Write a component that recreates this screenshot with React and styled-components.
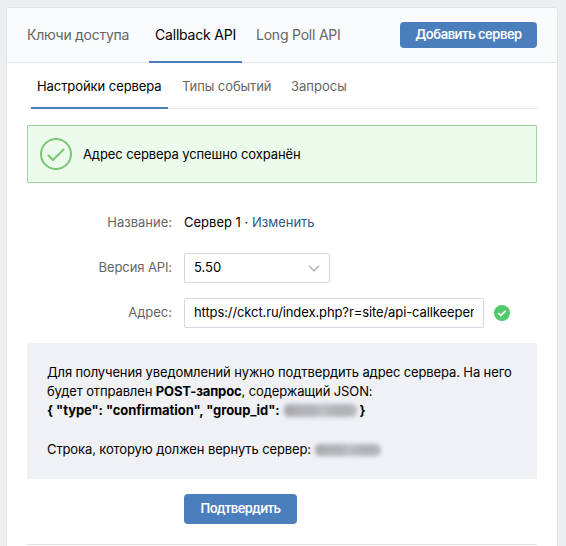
import React from "react";
import styled, { createGlobalStyle } from "styled-components";

const GlobalStyle = createGlobalStyle`
  * { box-sizing: border-box; }
  html, body { margin: 0; height: 546px; overflow: hidden; background: #edeef0; }
  body, input, button {
    font-family: Inter, "Liberation Sans", sans-serif;
    font-size: 13px;
    color: #000;
  }
`;

const Page = styled.main`
  height: 546px;
  padding: 7px 8px 0 6px;
  overflow: hidden;
`;

const Card = styled.section`
  height: 560px;
  background: #fff;
  border: 1px solid #e1e3e8;
  border-radius: 4px;
  overflow: hidden;
`;

const Header = styled.header`
  display: flex;
  align-items: flex-start;
  height: 55px;
  padding-right: 20px;
  background: #fafbfc;
  border-bottom: 1px solid #e4e6ea;
`;

const Tabs = styled.nav`
  display: flex;
  flex: 1;
  height: 55px;
`;

const Tab = styled.a`
  flex: none;
  width: ${(p) => p.$width}px;
  height: 55px;
  padding-left: ${(p) => p.$inset ?? 7}px;
  font-size: 14px;
  line-height: 54px;
  letter-spacing: ${(p) => p.$tracking ?? 0}px;
  white-space: nowrap;
  color: ${(p) => (p.$active ? "#000" : "#656565")};
  border-bottom: 2px solid ${(p) => (p.$active ? "#4a7ebd" : "transparent")};
`;

const Button = styled.button`
  flex: none;
  width: ${(p) => p.$width}px;
  height: ${(p) => p.$height}px;
  margin: ${(p) => p.$margin};
  padding: 0 0 2px;
  border: 0;
  border-radius: 4px;
  background: #4a7ebd;
  color: #fff;
  font-weight: 600;
  letter-spacing: ${(p) => p.$tracking ?? 0}px;
  white-space: nowrap;
`;

const Content = styled.div`
  padding: 0 20px;
`;

const SubTabs = styled.nav`
  display: flex;
  height: 46px;
  padding-left: 4px;
  border-bottom: 1px solid #e4e6ea;
`;

const SubTab = styled(Tab)`
  height: 46px;
  font-size: 13px;
  line-height: 47px;
`;

const Alert = styled.div`
  display: flex;
  align-items: center;
  height: 58px;
  margin-top: 16px;
  padding-left: 12px;
  gap: 11px;
  background: #ebfaeb;
  border: 1px solid #a2d5a5;
  border-radius: 1px;
  letter-spacing: -0.1px;
`;

const Form = styled.div`
  display: grid;
  grid-template-columns: 145px 1fr;
  grid-template-rows: 30px 30px 30px;
  row-gap: 15px;
  column-gap: 12px;
  align-items: center;
  margin-top: 25px;
`;

const Label = styled.label`
  padding-bottom: 2px;
  text-align: right;
  color: #656565;
  letter-spacing: ${(p) => p.$tracking ?? 0}px;
`;

const Value = styled.div`
  display: flex;
  align-items: center;
  gap: 10px;
`;

const Name = styled.span`
  padding-bottom: 2px;
  white-space: nowrap;
`;

const Link = styled.a`
  color: #2a5885;
`;

const Select = styled.div`
  display: flex;
  align-items: center;
  justify-content: space-between;
  width: 146px;
  height: 30px;
  padding: 0 9px;
  border: 1px solid #d3d9de;
  border-radius: 2px;
`;

const Option = styled.span`
  padding-bottom: 2px;
`;

const Input = styled.input`
  width: 300px;
  height: 30px;
  padding: 0 9px 2px;
  border: 1px solid #d3d9de;
  border-radius: 2px;
  outline: none;
  letter-spacing: -0.1px;
`;

const Info = styled.div`
  height: 136px;
  margin-top: 15px;
  padding: 20px 20px 0;
  background: #f0f1f5;
`;

const Line = styled.div`
  height: 19px;
  margin-bottom: ${(p) => p.$after ?? 0}px;
  line-height: 19px;
  display: flex;
  align-items: center;
  white-space: pre;
  font-weight: ${(p) => (p.$bold ? 700 : 400)};
  letter-spacing: ${(p) => p.$tracking ?? -0.12}px;
`;

const Redacted = styled.span`
  width: ${(p) => p.$width}px;
  height: ${(p) => p.$height}px;
  margin: 0 ${(p) => p.$after ?? 0}px 0 4px;
  border-radius: 5px;
  background: linear-gradient(90deg, #a6a6a9, #b2b3b6 22%, #b2b3b6 38%, #bfc0c3 52%, #b3b4b7 68%, #b0b1b4 85%, #bcbdc0);
  filter: blur(2px);
`;

const Divider = styled.div`
  height: 1px;
  background: #e0e2e6;
`;

function CircleCheck() {
  return (
    <svg width="32" height="32" viewBox="0 0 32 32" fill="none" stroke="#7bc576" strokeWidth="2">
      <circle cx="16" cy="16" r="15" />
      <path d="M8 17l5 5L24 11" />
    </svg>
  );
}

function ValidMark() {
  return (
    <svg width="16" height="16" viewBox="0 0 16 16" fill="none">
      <circle cx="8" cy="8" r="8" fill="#4fc96a" />
      <path d="M4.3 8.1l2.5 2.4 4.9-4.7" stroke="#fff" strokeWidth="1.8" />
    </svg>
  );
}

function Chevron() {
  return (
    <svg width="12" height="8" viewBox="0 0 12 8" fill="none">
      <path d="M1 1.8l5 5 5-5" stroke="#b4b8bd" strokeWidth="1.6" />
    </svg>
  );
}

export default function App() {
  return (
    <Page>
      <GlobalStyle />
      <Card>
        <Header>
          <Tabs>
            <Tab $width={142} $inset={20} $tracking={-0.27}>Ключи доступа</Tab>
            <Tab $width={93} $inset={6} $tracking={-0.2} $active>Callback API</Tab>
            <Tab $width={110} $inset={14} $tracking={-0.22}>Long Poll API</Tab>
          </Tabs>
          <Button $width={137} $height={26} $margin="14px 0 0" $tracking={-0.48}>Добавить сервер</Button>
        </Header>
        <Content>
          <SubTabs>
            <SubTab $width={137} $inset={6} $tracking={-0.07} $active>Настройки сервера</SubTab>
            <SubTab $width={116} $inset={14} $tracking={-0.08}>Типы событий</SubTab>
            <SubTab $width={80}>Запросы</SubTab>
          </SubTabs>
          <Alert>
            <CircleCheck />
            Адрес сервера успешно сохранён
          </Alert>
          <Form>
            <Label>Название:</Label>
            <Name>Сервер 1 · <Link>Изменить</Link></Name>
            <Label $tracking={-0.1}>Версия API:</Label>
            <Select><Option>5.50</Option><Chevron /></Select>
            <Label>Адрес:</Label>
            <Value>
              <Input readOnly value="https://ckct.ru/index.php?r=site/api-callkeeper" />
              <ValidMark />
            </Value>
          </Form>
          <Info>
            <Line>Для получения уведомлений нужно подтвердить адрес сервера. На него</Line>
            <Line>будет отправлен <b>POST-запрос</b>, содержащий JSON:</Line>
            <Line $bold $after={20} $tracking={-0.06}>{'{ "type": "confirmation", "group_id":'}<Redacted $width={73} $height={13} $after={3} />{"}"}</Line>
            <Line>Строка, которую должен вернуть сервер:<Redacted $width={66} $height={12} /></Line>
          </Info>
          <Button $width={113} $height={30} $margin="15px 0 20px 157px" $tracking={-0.6}>Подтвердить</Button>
          <Divider />
        </Content>
      </Card>
    </Page>
  );
}
